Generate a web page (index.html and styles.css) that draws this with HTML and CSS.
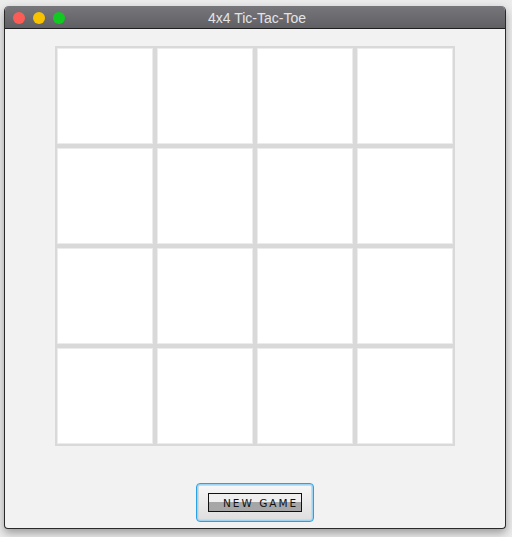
FILE: index.html
```html
<!DOCTYPE html>
<html>
<head>
<meta charset="utf-8">
<link rel="stylesheet" href="styles.css">
</head>
<body>
<div class="window">
  <div class="titlebar">
    <div class="lights">
      <span class="light red"></span>
      <span class="light yellow"></span>
      <span class="light green"></span>
    </div>
    <div class="title">4x4 Tic-Tac-Toe</div>
  </div>
  <div class="content">
    <div class="board">
      <div class="cell"></div><div class="cell"></div><div class="cell"></div><div class="cell"></div>
      <div class="cell"></div><div class="cell"></div><div class="cell"></div><div class="cell"></div>
      <div class="cell"></div><div class="cell"></div><div class="cell"></div><div class="cell"></div>
      <div class="cell"></div><div class="cell"></div><div class="cell"></div><div class="cell"></div>
    </div>
    <button class="new-game"><span class="label">NEW GAME</span></button>
  </div>
</div>
</body>
</html>
```

FILE: styles.css
```css
html, body {
  margin: 0;
  padding: 0;
}
body {
  width: 512px;
  height: 537px;
  background: #ececec;
  padding: 6px 6px 0 4px;
  box-sizing: border-box;
  font-family: "Liberation Sans", Arial, sans-serif;
  overflow: hidden;
}
.window {
  width: 502px;
  height: 523px;
  box-sizing: border-box;
  border: 1px solid #2a2a2a;
  border-top: none;
  border-radius: 5px 5px 4px 4px;
  background: #f2f2f2;
  box-shadow: 0 4px 10px rgba(0,0,0,0.35);
  display: flex;
  flex-direction: column;
  overflow: hidden;
}
.titlebar {
  height: 23px;
  flex: none;
  box-sizing: border-box;
  background: linear-gradient(#77767b, #605f64);
  border-bottom: 1px solid #1e1e1e;
  position: relative;
  display: flex;
  align-items: center;
  justify-content: center;
}
.lights {
  position: absolute;
  left: 8px;
  top: 6px;
  display: flex;
  gap: 8px;
}
.light {
  width: 12px;
  height: 12px;
  border-radius: 50%;
  display: block;
}
.red { background: #fb5d56; }
.yellow { background: #f7c300; }
.green { background: #12c922; }
.title {
  color: #e4e4e6;
  font-size: 14px;
  margin-left: 4px;
  margin-top: 1px;
}
.content {
  flex: 1;
  display: flex;
  flex-direction: column;
  align-items: center;
  padding-top: 17px;
}
.board {
  width: 400px;
  height: 400px;
  box-sizing: border-box;
  background: #d9d9d9;
  padding: 2px;
  display: grid;
  grid-template-columns: repeat(4, 96px);
  grid-template-rows: repeat(4, 96px);
  gap: 4px;
}
.cell {
  background: #ffffff;
  border: 1px solid #ececec;
  box-sizing: border-box;
}
.new-game {
  margin-top: 37px;
  width: 118px;
  height: 39px;
  box-sizing: border-box;
  border: 1px solid #27a2e6;
  border-radius: 4px;
  box-shadow: inset 0 0 0 1px #9fd3f2, inset 0 0 0 2px #d7d7d7;
  background: linear-gradient(#f7f7f7, #dedede);
  padding: 9px 11px;
  display: flex;
  align-items: stretch;
  justify-content: stretch;
}
.label {
  flex: 1;
  display: flex;
  align-items: center;
  justify-content: flex-start;
  border: 1px solid #111;
  background: linear-gradient(#efefef 0, #efefef 48%, #a6a6a6 48%, #a6a6a6 100%);
  font-family: "DejaVu Sans", sans-serif;
  font-size: 10.5px;
  letter-spacing: 2px;
  color: #111;
  padding-left: 14px;
  white-space: nowrap;
  overflow: hidden;
}
```
